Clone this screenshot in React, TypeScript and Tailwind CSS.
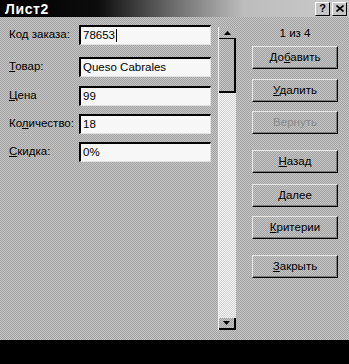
import React from 'react'

const font = "font-['Liberation_Sans',Arial,sans-serif]"
const dither = 'bg-[repeating-conic-gradient(#a2a2a2_0_25%,#c6c6c6_0_50%)] bg-[length:2px_2px]'

const fields = [
  { label: 'Код заказа:', key: '', value: '78653', top: 'mt-[8px]', caret: true },
  { label: 'Товар:', key: 'Т', value: 'Queso Cabrales', top: 'mt-[12px]' },
  { label: 'Цена', key: 'Ц', value: '99', top: 'mt-[9px]' },
  { label: 'Количество:', key: 'л', value: '18', top: 'mt-[8px]' },
  { label: 'Скидка:', key: 'С', value: '0%', top: 'mt-[8px]' },
]

const buttons = [
  { text: 'Добавить', u: 2, top: 'mt-[6px]' },
  { text: 'Удалить', u: 0, top: 'mt-[10px]' },
  { text: 'Вернуть', u: -1, top: 'mt-[9px]', disabled: true },
  { text: 'Назад', u: 0, top: 'mt-[16px]' },
  { text: 'Далее', u: 0, top: 'mt-[11px]' },
  { text: 'Критерии', u: 0, top: 'mt-[9px]' },
  { text: 'Закрыть', u: 0, top: 'mt-[16px]' },
]

function Label({ text, k }: { text: string; k: string }) {
  const i = k ? text.indexOf(k) : -1
  if (i < 0) return <>{text}</>
  return (
    <>
      {text.slice(0, i)}
      <span className="underline underline-offset-1">{text[i]}</span>
      {text.slice(i + 1)}
    </>
  )
}

function WinButton({ text, u, disabled }: { text: string; u: number; disabled?: boolean }) {
  return (
    <div
      className={`h-[23px] w-[86px] flex items-center justify-center border border-t-[#e6e6e6] border-l-[#e6e6e6] border-r-black border-b-black shadow-[inset_-1px_-1px_0_#7a7a7a] ${dither} text-[11.5px] ${
        disabled ? 'text-[#8a8a8a]' : 'text-black'
      }`}
    >
      {u >= 0 ? (
        <span>
          {text.slice(0, u)}
          <span className="underline underline-offset-1">{text[u]}</span>
          {text.slice(u + 1)}
        </span>
      ) : (
        text
      )}
    </div>
  )
}

export default function App() {
  return (
    <div className={`w-[349px] h-[364px] flex flex-col bg-black ${font}`}>
      {/* title bar */}
      <div className="h-[17px] flex items-center justify-between px-[5px] bg-[linear-gradient(90deg,#000_0%,#0c0c0c_28%,#6e6e6e_50%,#bdbdbd_70%,#cacaca_100%)]">
        <span className="text-white font-bold text-[14px] leading-none tracking-[0.6px]">Лист2</span>
        <div className="flex gap-[2px] -mr-[3px]">
          <div className="w-[15px] h-[14px] bg-[#c6c6c6] border border-t-white border-l-white border-r-black border-b-black flex items-center justify-center text-[11px] font-bold leading-none text-black">
            ?
          </div>
          <div className="w-[15px] h-[14px] bg-[#c6c6c6] border border-t-white border-l-white border-r-black border-b-black flex items-center justify-center">
            <svg width="8" height="7" viewBox="0 0 8 7">
              <path d="M0.5 0.5 L7.5 6.5 M7.5 0.5 L0.5 6.5" stroke="#000" strokeWidth="1.6" />
            </svg>
          </div>
        </div>
      </div>

      {/* body */}
      <div className={`h-[323px] flex ${dither}`}>
        {/* fields */}
        <div className="w-[218px] flex flex-col pl-[9px]">
          {fields.map((f) => (
            <div key={f.label} className={`flex items-center h-[20px] ${f.top}`}>
              <div className="w-[70px] text-[11.5px] text-black whitespace-nowrap">
                <Label text={f.label} k={f.key} />
              </div>
              <div className="w-[132px] h-[20px] flex items-center bg-[#f7f7f7] border-t-2 border-l-2 border-t-black border-l-black border-b border-r border-b-[#e0e0e0] border-r-[#e0e0e0] pl-[2px] text-[11.5px] text-black">
                {f.value}
                {f.caret && <span className="ml-[1px] w-px h-[13px] bg-black" />}
              </div>
            </div>
          ))}
        </div>

        {/* scrollbar */}
        <div className="w-[18px] mt-[10px] h-[303px] flex flex-col border-l border-[#eeeeee]">
          <div className={`h-[11px] flex items-center justify-center ${dither}`}>
            <svg width="7" height="4" viewBox="0 0 7 4">
              <path d="M3.5 0 L7 4 L0 4 Z" fill="#000" />
            </svg>
          </div>
          <div className={`h-[55px] border-t border-black border-r-2 border-b-2 ${dither}`} />
          <div className="flex-1 bg-[repeating-conic-gradient(#d2d2d2_0_25%,#f4f4f4_0_50%)] bg-[length:2px_2px]" />
          <div className={`h-[12px] flex items-center justify-center border-r-2 border-b-2 border-black ${dither}`}>
            <svg width="7" height="4" viewBox="0 0 7 4">
              <path d="M0 0 L7 0 L3.5 4 Z" fill="#000" />
            </svg>
          </div>
        </div>

        {/* buttons */}
        <div className="ml-[16px] w-[86px] flex flex-col">
          <div className="mt-[10px] h-[13px] flex items-center justify-center text-[11.5px] text-black">1 из 4</div>
          {buttons.map((b) => (
            <div key={b.text} className={b.top}>
              <WinButton text={b.text} u={b.u} disabled={b.disabled} />
            </div>
          ))}
        </div>
      </div>

      <div className="flex-1 bg-black" />
    </div>
  )
}
